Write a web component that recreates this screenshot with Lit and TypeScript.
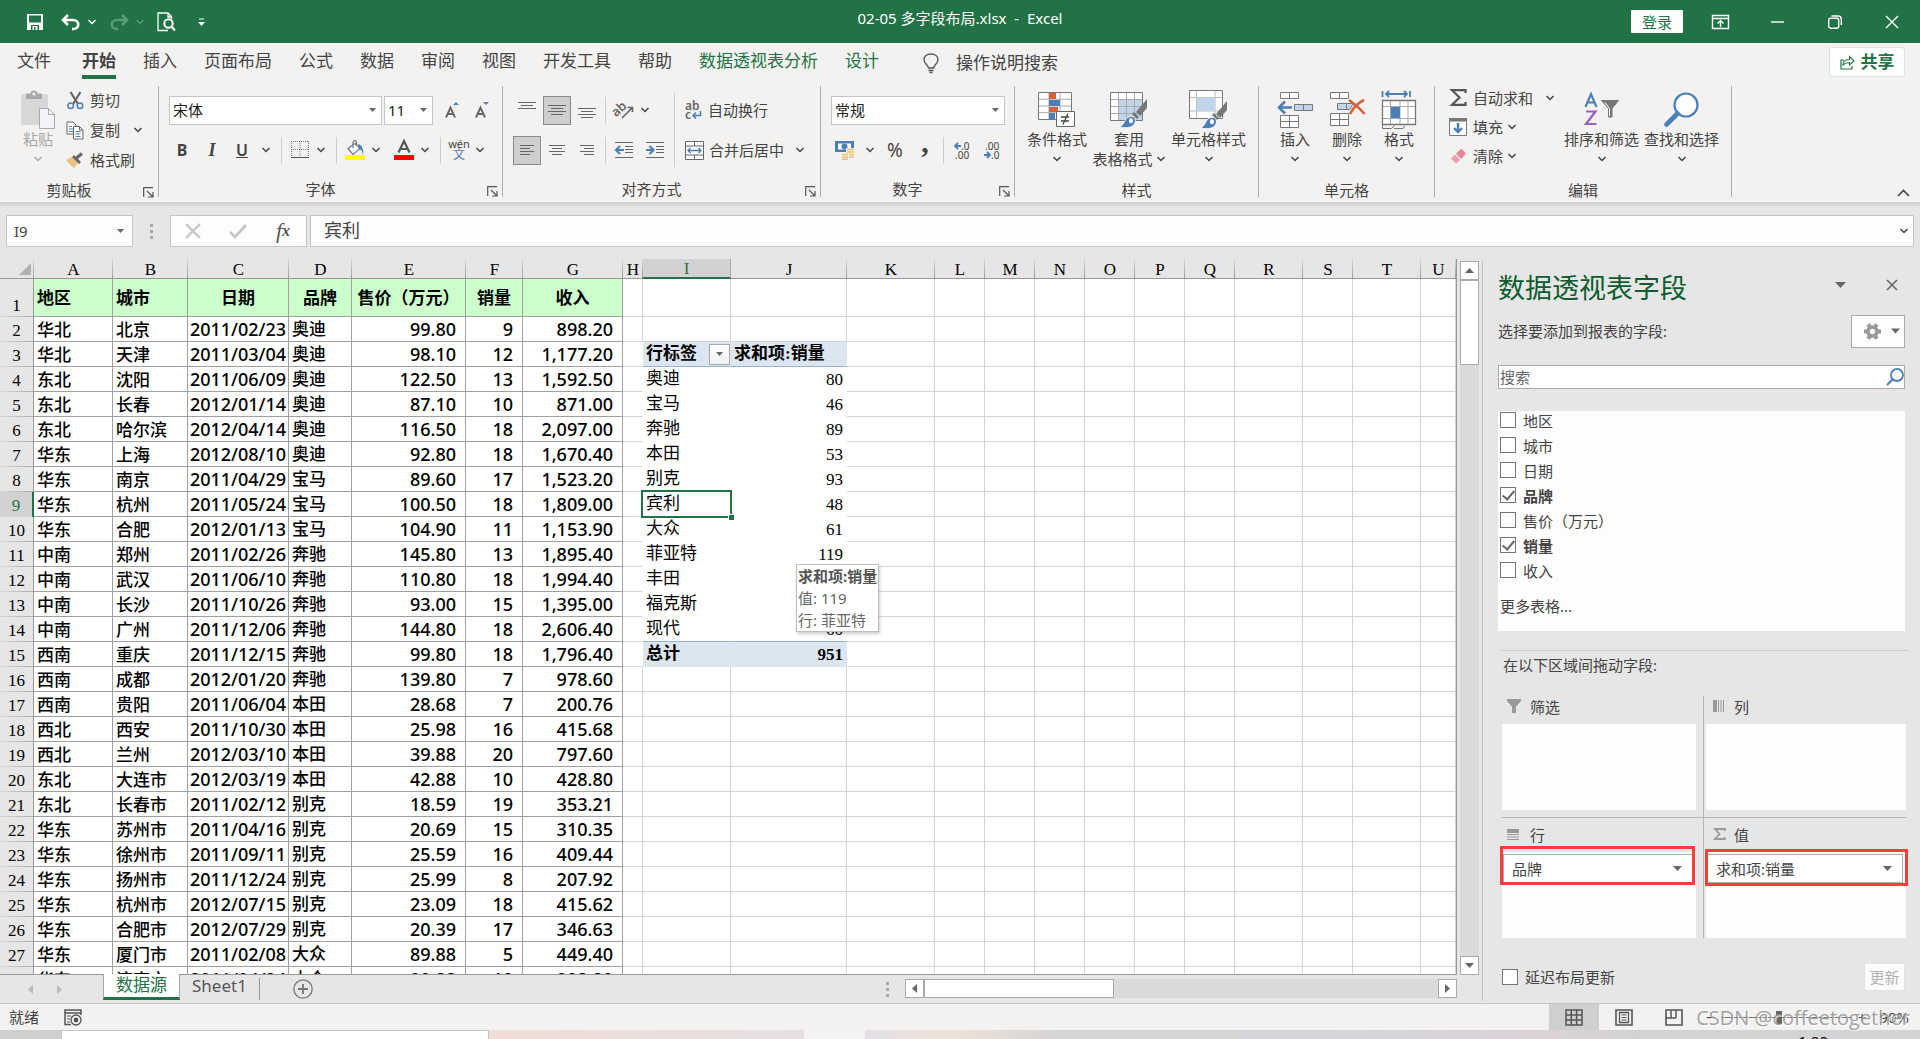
import { LitElement, html, svg, css, nothing } from "lit";
import { customElement } from "lit/decorators.js";
import { classMap } from "lit/directives/class-map.js";

const chevron = html`<svg class="chev" width="10" height="6" viewBox="0 0 10 6" aria-hidden="true"><path d="M1.5 1l3.500 3.500L8.500 1" fill="none" stroke="currentColor" stroke-width="1.500"/></svg>`;
const caret = html`<svg class="caret" width="7" height="4" viewBox="0 0 7 4" aria-hidden="true"><path d="M0 0h7L3.500 4z" fill="#666"/></svg>`;
const bigCaret = html`<svg width="11" height="6" viewBox="0 0 11 6" aria-hidden="true"><path d="M0 0h11L5.500 6z" fill="#666"/></svg>`;

const icon = (w: number, h: number, body: unknown) =>
  html`<svg width=${w} height=${h} viewBox="0 0 ${w} ${h}" fill="none" aria-hidden="true">${body}</svg>`;

const G = "#666";
const B = "#4a7fb8";

const lines = (rows: [number, number, number][]) =>
  rows.map(([x, y, w]) => svg`<path d="M${x} ${y + 0.5}h${w}" stroke=${G}/>`);

const I = {
  save: icon(16, 16, svg`<path d="M0 0h16v16H0z" fill="#fff"/><path d="M2 1.500h12v7H2zM4 11h8v5H4z" fill="#217346"/><path d="M5.500 12h5v4h-5z" fill="#fff"/><path d="M7 13h1.500v3H7z" fill="#217346"/>`),
  undo: icon(20, 16, svg`<path d="M7 1L2 6l5 5M3 6h9c7 0 7 9 0 9h-1" stroke="#fff" stroke-width="2.600"/>`),
  redo: icon(20, 16, svg`<path d="M13 1l5 5-5 5M17 6H8C1 6 1 15 8 15h1" stroke="#5a9a76" stroke-width="2.600"/>`),
  preview: icon(19, 20, svg`<path d="M11 18.500H1V1h10l3.500 3.500V7M11 1v4h3.500" stroke="#fff" stroke-width="1.300"/><circle cx="11.500" cy="11.500" r="4.200" stroke="#fff" stroke-width="2"/><path d="M14.500 14.500l3.500 4" stroke="#fff" stroke-width="2"/>`),
  custom: icon(7, 8, svg`<path d="M1 1h5" stroke="#fff"/><path d="M0 4h7L3.500 8z" fill="#fff"/>`),
  ribbonOpt: icon(17, 14, svg`<path d="M.5.5h16v13H.5zM.5 3.500h16" stroke="#fff" stroke-width="1.400"/><path d="M8.500 12V6M5.500 8.500l3-3 3 3" stroke="#fff" stroke-width="1.400"/>`),
  min: icon(13, 2, svg`<path d="M0 1h13" stroke="#fff" stroke-width="1.400"/>`),
  restore: icon(14, 14, svg`<rect x=".7" y="3.200" width="10" height="10" rx="2" stroke="#fff" stroke-width="1.400"/><path d="M3.500 1h6.500c2 0 3.300 1.300 3.300 3.300V10" stroke="#fff" stroke-width="1.400"/>`),
  close: icon(14, 14, svg`<path d="M1 1l12 12M13 1L1 13" stroke="#fff" stroke-width="1.400"/>`),
  bulb: icon(16, 21, svg`<path d="M5.500 15c0-3-4.500-4-4.500-8.500C1 3 4 1 8 1s7 2 7 5.500c0 4.500-4.500 5.500-4.500 8.500z" stroke="#555" stroke-width="1.400"/><path d="M5.500 17.500h5M6.500 19.500h3" stroke="#555" stroke-width="1.400"/>`),
  share: icon(15, 15, svg`<path d="M4 5H1v9h11v-3" stroke="#217346" stroke-width="1.200"/><path d="M3 10c0-4 3-5.500 6.500-5.500V1.500L14 6l-4.500 4V7.500C7 7.500 5 8 3 10z" stroke="#217346" stroke-width="1.100"/>`),
  paste: icon(36, 39, svg`<rect x="1" y="4" width="27" height="31" rx="2" fill="#d9d6d9"/><path d="M6 9V3.500h4.500C10.500-.5 17.500-.5 17.500 3.500H22V9z" fill="#a9a9a9"/><circle cx="14" cy="4" r="1.600" fill="#f3f2f1"/><path d="M19.500 18.500h9l6 6v14h-15z" fill="#f6f3f8" stroke="#a9a9a9"/><path d="M28.500 18.500v6h6" stroke="#a9a9a9"/>`),
  cut: icon(17, 19, svg`<path d="M3.500 1l7.500 12M13.500 1L6 13" stroke=${G} stroke-width="2.200"/><circle cx="3.700" cy="14.700" r="2.800" stroke=${B} stroke-width="1.500"/><circle cx="13" cy="14.700" r="2.800" stroke=${B} stroke-width="1.500"/>`),
  copy: icon(18, 19, svg`<path d="M1 1h6l3 3v9H1z" fill="#fff" stroke=${G}/><path d="M3 5.500h3M3 8h4M3 10.500h4" stroke=${B}/><path d="M7.500 5.500h6l3.500 3.500v9H7.500z" fill="#fff" stroke=${G}/><path d="M13.500 5.500V9H17" stroke=${G}/><path d="M9.500 10.500h5M9.500 13h5M9.500 15.500h5" stroke=${B}/>`),
  brush: icon(18, 16, svg`<path d="M0 8l6-3 6 6-4 5C5 14 3 11 0 8z" fill="#ecc083"/><path d="M6 5l2-2 7 7-2 2z" fill=${G}/><path d="M10.500 6L16 1.500" stroke=${G} stroke-width="3"/>`),
  grow: icon(14, 16, svg`<path d="M8 3h6L11 0z" fill=${B}/><path d="M1 15.500L5.500 5.500 10 15.500M2.800 12h5.400" stroke=${G} stroke-width="1.900"/>`),
  shrink: icon(14, 16, svg`<path d="M8 0h6L11 3z" fill=${B}/><path d="M1 15.500L5.500 5.500 10 15.500M2.800 12h5.400" stroke=${G} stroke-width="1.900"/>`),
  border: icon(18, 18, svg`<path d="M.5 0v16M17.500 0v16M9 0v16M0 .5h18M0 8.500h18" stroke="#777" stroke-dasharray="1 1"/><path d="M0 16.500h18" stroke="#555"/>`),
  fill: icon(20, 20, svg`<path d="M3 8.500l7-5 5 5-7 6z" fill="#fff" stroke="#777" stroke-width="1.200"/><path d="M8 8V2.500c0-2.500 3.500-2.500 3.500 0V5" stroke="#777" stroke-width="1.200"/><path d="M13 4c4 1 6 5 5 11-1-4-1-5-4-6z" fill=${B}/><path d="M0 15h20v5H0z" fill="#ff0"/>`),
  fontColor: icon(20, 20, svg`<path d="M4.500 12.500L10 1l5.500 11.500M6.500 9h7" stroke="#555" stroke-width="2.200"/><path d="M0 15h20v5H0z" fill="#f00"/>`),
  top: icon(18, 18, lines([[0, 1, 18], [3, 4, 12], [0, 7, 18]])),
  mid: icon(18, 12, lines([[0, 1, 18], [3, 4, 12], [0, 7, 18], [3, 10, 12]])),
  bot: icon(18, 18, lines([[0, 7, 18], [3, 10, 12], [0, 13, 18], [3, 16, 12]])),
  left: icon(14, 12, lines([[0, 1, 14], [0, 4, 10], [0, 7, 14], [0, 10, 10]])),
  center: icon(16, 12, lines([[0, 1, 16], [3, 4, 10], [0, 7, 16], [3, 10, 10]])),
  right: icon(14, 12, lines([[0, 1, 14], [4, 4, 10], [0, 7, 14], [4, 10, 10]])),
  outdent: icon(18, 16, svg`${lines([[0, 0, 18], [10, 4, 8], [10, 7, 8], [10, 10, 8], [0, 15, 18]])}<path d="M9 8H1.500M5 4L1 8l4 4" stroke=${B} stroke-width="2.200"/>`),
  indent: icon(18, 16, svg`${lines([[0, 0, 18], [10, 4, 8], [10, 7, 8], [10, 10, 8], [0, 15, 18]])}<path d="M0 8h7M3.500 4l4 4-4 4" stroke=${B} stroke-width="2.200"/>`),
  orient: icon(20, 18, svg`<text x="-1" y="13" transform="rotate(-42 5 11)" font-family="Noto Sans" font-size="13" font-weight="600" fill=${G}>ab</text><path d="M8 17L18 7M13.500 6.500H18.500V11" stroke=${G} stroke-width="1.600"/>`),
  wrap: icon(18, 19, svg`<text x="0" y="9" font-family="Noto Sans" font-size="12" font-weight="600" fill=${G}>ab</text><text x="0" y="18" font-family="Noto Sans" font-size="12" font-weight="600" fill=${G}>c</text><path d="M15.500 10v4.500H8.500M11 11.500l-3 3 3 3" stroke=${B} stroke-width="1.600"/>`),
  merge: icon(19, 19, svg`<path d="M.5.5h18v18H.5zM.5 5h18M.5 14h18M9.500.5V5M9.500 14v4.500" fill="#fff" stroke=${G}/><path d="M3 9.500h13M5.500 7L3 9.500 5.500 12M13.500 7l2.500 2.500-2.500 2.500" stroke=${B} stroke-width="1.400"/>`),
  money: icon(20, 19, svg`<path d="M0 0h19v11H0z" fill=${B}/><path d="M3 2.500h13v6H3z" fill="#fff"/><circle cx="9.500" cy="5.500" r="3" fill=${B}/><path d="M11 7h9v5h-4v7H6v-6h5z" fill="#f3f2f1"/><path d="M12 8.500h7M12 11h7M7 13.500h6M7 16h6M7 18.200h6M14 13.500h5M14 16h5" stroke="#ecbf72" stroke-width="1.600"/>`),
  decInc: icon(16, 17, svg`<path d="M7 4H1M4 1L1 4l3 3" stroke=${B} stroke-width="1.800"/><text x="7" y="8" font-family="Noto Sans" font-size="10" fill="#444">.0</text><text x="1" y="17" font-family="Noto Sans" font-size="10" fill="#444">.00</text>`),
  decDec: icon(16, 17, svg`<path d="M0 13h6M3 10l3 3-3 3" stroke=${B} stroke-width="1.800"/><text x="1" y="8" font-family="Noto Sans" font-size="10" fill="#444">.00</text><text x="7" y="17" font-family="Noto Sans" font-size="10" fill="#444">.0</text>`),
  cond: icon(38, 35, svg`<path d="M.5.5h33v27H.5z" fill="#fff"/><path d="M11 .5v27M22 .5v27M0 7.200h34M0 14h34M0 20.700h34" stroke="#aaa"/><path d="M.5.5h33v27H.5z" stroke="#777"/><path d="M11 1h7v6h-7zM11 15h9v5h-9z" fill="#d9603b"/><path d="M11 8h11v6H11zM11 21h6v6h-6z" fill=${B}/><path d="M18.500 19.500h18v15h-18z" fill="#fff" stroke="#666"/><path d="M23 25h8M23 29h8M30 21.500l-5 11" stroke="#444" stroke-width="1.300"/>`),
  tableFmt: icon(38, 36, svg`<path d="M.5.500h32v28H.5z" fill="#fff"/><path d="M8.500 7.500h24v21h-24z" fill="#c0d4ea"/><path d="M8.500.5v28M16.500.5v28M24.500.5v28M0 7.500h33M0 14.500h33M0 21.500h33" stroke="#aaa"/><path d="M.5.5h32v28H.5z" stroke="#777"/><path d="M37 7v9l-7 8-4-4z" fill="#777"/><path d="M24 20l5 5-2 2-5-5z" fill="#777"/><path d="M9 35.500c6-2 5-10 11-11 5-1 7 4 4 8s-9 3-15 3z" fill=${B} stroke="#fff" stroke-width=".8"/><path d="M20 26c3 0 4 3 2 5-3 1-4-2-2-5z" fill="#fff"/>`),
  cellStyle: icon(39, 39, svg`<path d="M.5.500h33v28H.5z" fill="#fff"/><path d="M7.500.5v28M26 .5v28M0 7.500h34M0 21h34" stroke="#bbb"/><path d="M7.500 7.500H26V21H7.500z" fill="#c0d4ea"/><path d="M.5.5h33v28H.5z" stroke="#777"/><path d="M38 11v9l-7 8-4-4z" fill="#777"/><path d="M25 23l5 5-2 2-5-5z" fill="#777"/><path d="M11 38.500c6-2 5-10 11-11 5-1 7 4 4 8s-9 3-15 3z" fill=${B} stroke="#fff" stroke-width=".8"/><path d="M22 29c3 0 4 3 2 5-3 1-4-2-2-5z" fill="#fff"/>`),
  insert: icon(37, 36, svg`<path d="M3.500.5h18v6h-18zM12.500.5v6M3.500 23.500h18v12h-18zM12.500 23.500v12M3.500 29.500h18" fill="#fff" stroke="#777"/><path d="M17.500 12.500h18v6h-18zM26.500 12.500v6" fill="#c0d4ea" stroke="#777"/><path d="M15 15.500H3M8 9.500l-6 6 6 6" stroke=${B} stroke-width="2.600"/>`),
  del: icon(37, 36, svg`<path d="M1.500.5h18v6h-18zM10.500.5v6M1.500 21.500h18v12h-18zM10.500 21.500v12M1.500 27.500h18" fill="#fff" stroke="#777"/><path d="M8.500 11.500h16l-4 6h-12zM17.500 11.500v6" fill="#c0d4ea" stroke="#777"/><path d="M20 8c4 3 11 8 15.500 14M35 8c-6 3-11 8-14 14" stroke="#d9603b" stroke-width="2.600"/>`),
  format: icon(35, 38, svg`<path d="M.5 0v6M28 0v6M4 3h21M7 0L4 3l3 3M22 0l3 3-3 3" stroke=${B} stroke-width="1.800"/><path d="M.5 9.500h33v24H.5z" fill="#fff"/><path d="M8.500 9v24M18 9v24M26 9v24M0 15.500h34M0 27.500h34" stroke="#aaa"/><path d="M.5 9.500h33v24H.5z" stroke="#777" stroke-width="1.300"/><path d="M9 16h9v11H9z" fill=${B}/><path d="M.5 34v3.500h9l3-3M12 37.500h9l2-3" stroke="#777"/>`),
  sigma: icon(17, 17, svg`<path d="M15.500 4V1.200H2L9.500 8.500 2 15.800h13.500V13" stroke="#555" stroke-width="2.200"/>`),
  fillDown: icon(18, 18, svg`<path d="M.5.5h17v17H.5z" fill="#fff" stroke="#777"/><path d="M0 0h18v3.500H0z" fill="#777"/><path d="M9 5v9M5 10l4 4 4-4" stroke=${B} stroke-width="2.400"/>`),
  eraser: icon(17, 16, svg`<path d="M6 5.500L11.500.8 16 5.500 11 11z" fill="#e8869a"/><path d="M5 6.500L10 12l-4 3.500L1 10.500z" fill="#eb9fae"/>`),
  sort: icon(36, 34, svg`<path d="M1.500 14L7 1l5.500 13M3.500 9.500h7" stroke=${B} stroke-width="2.200"/><path d="M2 18.500h9.500L2 31h10.500" stroke="#9b5fc0" stroke-width="2.200"/><path d="M17.500 7.500h17l-6.500 8V24h-3.500v-8.500z" fill="#777" stroke="#777"/><path d="M21 9.500l4.500 6V23" stroke="#fff"/>`),
  find: icon(35, 35, svg`<circle cx="22" cy="13" r="11.500" fill="#fff" stroke=${B} stroke-width="2.200"/><path d="M13.500 21.500L2.500 32.500" stroke=${B} stroke-width="4.600" stroke-linecap="round"/>`),
  launcher: icon(11, 11, svg`<path d="M.7 10V.7H10M4 4l6 6M10 5v5H5" stroke="#555" stroke-width="1.200"/>`),
  cancel: icon(16, 16, svg`<path d="M1 1l14 14M15 1L1 15" stroke="#c4c4c4" stroke-width="2.200"/>`),
  ok: icon(18, 14, svg`<path d="M1 8l5 5L17 1" stroke="#c4c4c4" stroke-width="2.600"/>`),
  gear: icon(17, 17, svg`<circle cx="8.500" cy="8.500" r="4.500" stroke="#999" stroke-width="3.600"/><path d="M0 8.500h3M14 8.500h3M4.200 1.200l1.600 2.600M12.800 1.200l-1.600 2.600M4.200 15.800l1.600-2.600M12.800 15.800l-1.600-2.600" stroke="#999" stroke-width="4"/>`),
  search: icon(18, 18, svg`<circle cx="11" cy="7" r="6" stroke=${B} stroke-width="1.800"/><path d="M6.500 11.500L1 17" stroke=${B} stroke-width="2.200"/>`),
  paneClose: icon(12, 12, svg`<path d="M1 1l10 10M11 1L1 11" stroke="#666" stroke-width="1.600"/>`),
  funnel: icon(14, 14, svg`<path d="M0 0h14v2L9 7.500V14H5V7.500L0 2z" fill="#999"/>`),
  cols: icon(11, 12, svg`<path d="M0 0h4v12H0z" fill="#999"/><path d="M5.500 0v12M8 0v12M10.500 0v12" stroke="#999"/>`),
  rows: icon(12, 11, svg`<path d="M0 0h12v4H0z" fill="#999"/><path d="M0 5.500h12M0 8h12M0 10.500h12" stroke="#999"/>`),
  sum: icon(13, 12, svg`<path d="M11.800 3V1H2l4.500 5L2 11h9.800V9" stroke="#999" stroke-width="1.800"/>`),
  plus: icon(20, 20, svg`<circle cx="10" cy="10" r="9.200" stroke="#777" stroke-width="1.300"/><path d="M10 5v10M5 10h10" stroke="#777" stroke-width="1.800"/>`),
  macro: icon(18, 17, svg`<path d="M17 6V1H1v14.500h6M1 4h16" stroke="#555" stroke-width="1.500"/><path d="M3 7h4M3 10h3M3 13h3" stroke="#555"/><circle cx="12" cy="11" r="5" stroke="#555" stroke-width="1.300"/><circle cx="12" cy="11" r="2.400" fill="#555"/>`),
  normal: icon(18, 17, svg`<path d="M1 1h16v15H1zM6.300 1v15M11.600 1v15M1 6h16M1 11h16" stroke="#555" stroke-width="1.500"/>`),
  pageLayout: icon(18, 17, svg`<path d="M1 1h16v15H1z" stroke="#555" stroke-width="1.600"/><path d="M4.500 3.500h9v10h-9z" stroke="#555" stroke-width="1.300"/><path d="M6.500 6h5M6.500 8.500h5M6.500 11h5" stroke="#555"/>`),
  pageBreak: icon(18, 17, svg`<path d="M1 1h16v15H1z" stroke="#555" stroke-width="1.600"/><path d="M6 1v8M1 9h10M11 1v8" stroke="#555" stroke-width="1.500"/>`),
  collapse: icon(13, 8, svg`<path d="M1 7l5.500-5.500L12 7" stroke="#444" stroke-width="1.600"/>`),
  arrow: (d: string) => icon(9, 9, svg`<path d=${d} fill="#666"/>`),
};

const UP = "M0 7h9L4.500 2z";
const DOWN = "M0 2h9L4.500 7z";
const LEFT = "M7 0v9L2 4.500z";
const RIGHT = "M2 0v9L7 4.500z";

const COLUMNS: [string, number][] = [
  ["A", 79], ["B", 75], ["C", 101], ["D", 63], ["E", 114], ["F", 57], ["G", 100], ["H", 20], ["I", 88], ["J", 116],
  ["K", 88], ["L", 50], ["M", 50], ["N", 50], ["O", 50], ["P", 50], ["Q", 50], ["R", 68], ["S", 50], ["T", 68], ["U", 0],
];

const DATA = `地区|城市|日期|品牌|售价（万元）|销量|收入
华北|北京|2011/02/23|奥迪|99.80|9|898.20
华北|天津|2011/03/04|奥迪|98.10|12|1,177.20
东北|沈阳|2011/06/09|奥迪|122.50|13|1,592.50
东北|长春|2012/01/14|奥迪|87.10|10|871.00
东北|哈尔滨|2012/04/14|奥迪|116.50|18|2,097.00
华东|上海|2012/08/10|奥迪|92.80|18|1,670.40
华东|南京|2011/04/29|宝马|89.60|17|1,523.20
华东|杭州|2011/05/24|宝马|100.50|18|1,809.00
华东|合肥|2012/01/13|宝马|104.90|11|1,153.90
中南|郑州|2011/02/26|奔驰|145.80|13|1,895.40
中南|武汉|2011/06/10|奔驰|110.80|18|1,994.40
中南|长沙|2011/10/26|奔驰|93.00|15|1,395.00
中南|广州|2011/12/06|奔驰|144.80|18|2,606.40
西南|重庆|2011/12/15|奔驰|99.80|18|1,796.40
西南|成都|2012/01/20|奔驰|139.80|7|978.60
西南|贵阳|2011/06/04|本田|28.68|7|200.76
西北|西安|2011/10/30|本田|25.98|16|415.68
西北|兰州|2012/03/10|本田|39.88|20|797.60
东北|大连市|2012/03/19|本田|42.88|10|428.80
东北|长春市|2011/02/12|别克|18.59|19|353.21
华东|苏州市|2011/04/16|别克|20.69|15|310.35
华东|徐州市|2011/09/11|别克|25.59|16|409.44
华东|扬州市|2011/12/24|别克|25.99|8|207.92
华东|杭州市|2012/07/15|别克|23.09|18|415.62
华东|合肥市|2012/07/29|别克|20.39|17|346.63
华东|厦门市|2011/02/08|大众|89.88|5|449.40
华东|济南市|2011/04/24|大众|90.88|10|908.80`.split("\n").map((r) => r.split("|"));

const PIVOT: Record<number, [string, string]> = {
  3: ["行标签", "求和项:销量"],
  4: ["奥迪", "80"], 5: ["宝马", "46"], 6: ["奔驰", "89"], 7: ["本田", "53"], 8: ["别克", "93"], 9: ["宾利", "48"],
  10: ["大众", "61"], 11: ["菲亚特", "119"], 12: ["丰田", ""], 13: ["福克斯", ""], 14: ["现代", "60"], 15: ["总计", "951"],
};

const UI_FONT = css`"Noto Sans", "Noto Sans CJK SC", sans-serif`;

const base = css`
  * { box-sizing: border-box; }
  svg { display: block; flex: none; overflow: visible; }
  button, input, select { font: inherit; color: inherit; margin: 0; }
  button { background: none; border: 0; padding: 0; display: flex; align-items: center; justify-content: center; white-space: nowrap; cursor: default; }
`;

@customElement("title-bar")
class TitleBar extends LitElement {
  static styles = [base, css`
    :host { display: grid; grid-template-columns: 1fr auto 1fr; align-items: center; height: 43px; background: #217346; color: #fff; font: 15px/20px ${UI_FONT}; }
    .quick { display: flex; align-items: center; padding-left: 27px; }
    .gap { margin-right: 18px; }
    .undo { margin-right: 6px; }
    .drop { margin-right: 12px; }
    .dim { color: #5a9a76; }
    .preview { margin-right: 22px; }
    .title { white-space: pre; padding-bottom: 7px; }
    .win { display: flex; align-items: center; justify-content: flex-end; }
    .win button { width: 57px; height: 43px; }
    .win .login { width: 52px; height: 23px; background: #fff; color: #217346; margin-right: 9px; border-radius: 1px; }
  `];
  render() {
    return html`
      <div class="quick">
        <button class="gap" aria-label="保存">${I.save}</button>
        <button class="undo" aria-label="撤消">${I.undo}</button><button class="drop" aria-label="撤消列表">${chevron}</button>
        <button class="undo" aria-label="恢复">${I.redo}</button><button class="drop dim" aria-label="恢复列表">${chevron}</button>
        <button class="preview" aria-label="打印预览">${I.preview}</button>
        <button aria-label="自定义快速访问工具栏">${I.custom}</button>
      </div>
      <div class="title">02-05 多字段布局.xlsx  -  Excel</div>
      <div class="win">
        <button class="login">登录</button>
        <button aria-label="功能区显示选项">${I.ribbonOpt}</button>
        <button aria-label="最小化">${I.min}</button>
        <button aria-label="还原">${I.restore}</button>
        <button aria-label="关闭">${I.close}</button>
      </div>`;
  }
}

@customElement("ribbon-tabs")
class RibbonTabs extends LitElement {
  static styles = [base, css`
    :host { display: flex; align-items: flex-start; height: 37px; padding: 4px 15px 0 17px; background: #f3f2f1; color: #444; font: 17px/30px ${UI_FONT}; }
    nav { display: flex; gap: 27px; }
    .tab { height: 32px; border-bottom: 4px solid transparent; line-height: 28px; }
    .file { margin-right: 4px; }
    .active { font-weight: 700; border-color: #217346; }
    .context { color: #217346; }
    .tell { height: 32px; gap: 17px; margin-left: 44px; }
    .share { margin-left: auto; width: 76px; height: 30px; gap: 6px; color: #217346; font-weight: 700; background: #fff; border: 1px solid #e1dfdd; border-radius: 3px; }
  `];
  render() {
    const tabs = ["文件", "开始", "插入", "页面布局", "公式", "数据", "审阅", "视图", "开发工具", "帮助", "数据透视表分析", "设计"];
    return html`
      <nav>${tabs.map((t, i) => html`<button class=${classMap({ tab: true, file: i === 0, active: i === 1, context: i > 9 })}>${t}</button>`)}</nav>
      <button class="tell">${I.bulb}<span>操作说明搜索</span></button>
      <button class="share">${I.share}<span>共享</span></button>`;
  }
}

@customElement("ribbon-body")
class RibbonBody extends LitElement {
  static styles = [base, css`
    :host { display: flex; height: 122px; background: #f3f2f1; color: #444; font: 15px/20px ${UI_FONT}; }
    .group { display: grid; grid-template-rows: 1fr 23px; }
    .vr { width: 1px; background: #b1b1b1; margin: 6px 0 5px; flex: none; }
    .foot { display: flex; align-items: flex-start; }
    .foot span { flex: 1; text-align: center; }
    .foot button { width: 20px; height: 25px; }
    .clip { width: 158px; } .font { width: 343px; } .align { width: 317px; } .num { width: 193px; }
    .styles { width: 243px; } .cells { width: 175px; } .edit { width: 296px; }
    .body { display: flex; align-items: flex-start; }
    .rows { display: grid; gap: 10px; padding: 15px 0 0 10px; }
    .font .row2 { margin-left: -2px; }
    .row { display: flex; align-items: center; height: 30px; }
    .b { width: 24px; height: 29px; }
    .m { width: 28px; height: 29px; }
    .w { width: 30px; height: 29px; }
    .on { background: #d0cecd; border: 1px solid #8c8c8c; }
    .drop { width: 18px; height: 29px; }
    .sp { gap: 2px; display: flex; }
    .sep { width: 1px; height: 27px; background: #d0cecd; margin: 0 6px; flex: none; }
    .near { margin-left: 4px; }
    .num .near { margin-right: 4px; }
    .tall { width: 1px; height: 74px; background: #d0cecd; margin: 13px 7px 0; }
    .after { margin-left: 7px; }
    .pick { display: grid; align-items: center; height: 29px; background: #fff; border: 1px solid #c6c6c6; color: #222; }
    .pick > * { grid-area: 1 / 1; }
    .pick .caret { justify-self: end; margin-right: 5px; pointer-events: none; }
    select { appearance: none; border: 0; background: none; width: 100%; height: 100%; padding: 0 0 0 3px; outline: 0; }
    .face { width: 213px; margin-right: 2px; } .size { width: 49px; margin-right: 4px; } .numfmt { width: 174px; }
    .label { gap: 2px; }
    .label svg { margin: 0 3px; }
    .rows2 { display: grid; gap: 10px; padding-top: 15px; }
    .bold { font-weight: 700; font-size: 16px; } .ital { font: italic 700 18px/20px "Liberation Serif", serif; } .under { text-decoration: underline; font-weight: 600; font-size: 16px; }
    .wen { display: grid; justify-items: center; font-size: 11px; line-height: 10px; }
    .wen b { color: #4a7fb8; font-weight: 400; font-size: 12px; line-height: 12px; }
    .pct { font-size: 19px; } .comma { font: 700 30px/10px "Liberation Serif", serif; padding-bottom: 16px; }
    .big { display: flex; flex-direction: column; justify-content: flex-start; height: 90px; white-space: nowrap; }
    .big .pic { height: 39px; display: grid; align-items: center; }
    .big .line { height: 20px; display: flex; align-items: center; justify-content: center; }
    .bigs { display: flex; gap: 5px; padding-top: 10px; }
    .c60 { width: 60px; } .c74 { width: 74px; } .c75 { width: 75px; } .c48 { width: 48px; }
    .line .chev { margin-left: 3px; }
    .only .chev { margin: 0; }
    .disabled { color: #a8a8a8; }
    .paste { padding: 10px 0 0 20px; }
    .small { display: grid; padding: 5px 0 0 10px; grid-auto-rows: 30px; align-items: center; justify-items: start; }
    .tool { height: 24px; gap: 6px; }
    .tool .pic { width: 18px; display: grid; justify-items: center; }
    .tool .chev { margin-left: 7px; }
    .edits { padding: 3px 0 0 14px; grid-auto-rows: 29px; width: 129px; }
    .edits .chev { margin-left: -2px; }
    .edits .wide .chev { margin-left: 6px; }
    .st { padding-left: 12px; } .ce { padding-left: 12px; gap: 4px; }
    .fold { margin: auto 10px 5px auto; }
  `];
  foot(label: string, launch = true) {
    return html`<div class="foot"><span>${label}</span>${launch ? html`<button aria-label="${label}设置">${I.launcher}</button>` : nothing}</div>`;
  }
  b(cls: string, label: string, content: unknown) {
    return html`<button class=${cls} aria-label=${label}>${content}</button>`;
  }
  drop(label: string) {
    return html`<button class="drop" aria-label="${label}选项">${chevron}</button>`;
  }
  big(cls: string, pic: unknown, label: string, second?: string) {
    return html`<button class="big ${cls}"><span class="pic">${pic}</span><span class="line">${label}</span>
      <span class=${second ? "line" : "line only"}>${second ?? ""}${chevron}</span></button>`;
  }
  render() {
    return html`
      <section class="group clip">
        <div class="body">
          <div class="paste">${this.big("disabled", I.paste, "粘贴")}</div>
          <div class="small">
            <button class="tool"><span class="pic">${I.cut}</span>剪切</button>
            <button class="tool"><span class="pic">${I.copy}</span>复制${chevron}</button>
            <button class="tool"><span class="pic">${I.brush}</span>格式刷</button>
          </div>
        </div>
        ${this.foot("剪贴板")}
      </section><div class="vr"></div>
      <section class="group font">
        <div class="body"><div class="rows">
          <div class="row">
            <div class="pick face"><select aria-label="字体"><option>宋体</option></select>${caret}</div>
            <div class="pick size"><select aria-label="字号"><option>11</option></select>${caret}</div>
            ${this.b("w", "增大字号", I.grow)}${this.b("w", "减小字号", I.shrink)}
          </div>
          <div class="row row2">
            ${this.b("w bold", "加粗", "B")}${this.b("w ital", "倾斜", "I")}${this.b("w under", "下划线", "U")}${this.drop("下划线")}
            <i class="sep"></i>${this.b("b", "边框", I.border)}${this.drop("边框")}
            <i class="sep"></i>${this.b("b", "填充颜色", I.fill)}${this.drop("填充颜色")}
            ${this.b("b after", "字体颜色", I.fontColor)}${this.drop("字体颜色")}
            <i class="sep"></i>${this.b("b", "拼音", html`<span class="wen">wén<b>文</b></span>`)}${this.drop("拼音")}
          </div>
        </div></div>
        ${this.foot("字体")}
      </section><div class="vr"></div>
      <section class="group align">
        <div class="body">
          <div class="rows">
            <div class="row"><div class="sp">${this.b("m", "顶端对齐", I.top)}${this.b("m on", "垂直居中", I.mid)}${this.b("m", "底端对齐", I.bot)}</div>
              <i class="sep near"></i>${this.b("b", "方向", I.orient)}${this.drop("方向")}</div>
            <div class="row"><div class="sp">${this.b("m on", "左对齐", I.left)}${this.b("m", "居中", I.center)}${this.b("m", "右对齐", I.right)}</div>
              <i class="sep near"></i>${this.b("b", "减少缩进量", I.outdent)}${this.b("b after", "增加缩进量", I.indent)}</div>
          </div>
          <i class="tall"></i>
          <div class="rows2">
            <div class="row"><button class="label">${I.wrap}自动换行</button></div>
            <div class="row"><button class="label">${I.merge}合并后居中</button><span class="after">${this.drop("合并")}</span></div>
          </div>
        </div>
        ${this.foot("对齐方式")}
      </section><div class="vr"></div>
      <section class="group num">
        <div class="body"><div class="rows">
          <div class="row"><div class="pick numfmt"><select aria-label="数字格式"><option>常规</option></select>${caret}</div></div>
          <div class="row"><div class="sp">${this.b("m", "会计数字格式", I.money)}${this.drop("会计数字格式")}${this.b("m pct", "百分比样式", "%")}${this.b("m comma", "千位分隔样式", ",")}</div>
            <i class="sep near"></i><div class="sp">${this.b("m", "增加小数位数", I.decInc)}${this.b("m", "减少小数位数", I.decDec)}</div></div>
        </div></div>
        ${this.foot("数字")}
      </section><div class="vr"></div>
      <section class="group styles">
        <div class="bigs st">${this.big("c60", I.cond, "条件格式")}${this.big("c74", I.tableFmt, "套用", "表格格式")}${this.big("c75", I.cellStyle, "单元格样式")}</div>
        ${this.foot("样式", false)}
      </section><div class="vr"></div>
      <section class="group cells">
        <div class="bigs ce">${this.big("c48", I.insert, "插入")}${this.big("c48", I.del, "删除")}${this.big("c48", I.format, "格式")}</div>
        ${this.foot("单元格", false)}
      </section><div class="vr"></div>
      <section class="group edit">
        <div class="body">
          <div class="small edits">
            <button class="tool wide"><span class="pic">${I.sigma}</span>自动求和${chevron}</button>
            <button class="tool"><span class="pic">${I.fillDown}</span>填充${chevron}</button>
            <button class="tool"><span class="pic">${I.eraser}</span>清除${chevron}</button>
          </div>
          <div class="bigs">${this.big("c75", I.sort, "排序和筛选")}${this.big("c75", I.find, "查找和选择")}</div>
        </div>
        ${this.foot("编辑", false)}
      </section><div class="vr"></div>
      <button class="fold" aria-label="折叠功能区">${I.collapse}</button>`;
  }
}

@customElement("formula-bar")
class FormulaBar extends LitElement {
  static styles = [base, css`
    :host { display: flex; height: 57px; padding: 13px 6px 12px; background: linear-gradient(#cfcdcc, #e6e6e6 6px); color: #444; font: 15px/20px ${UI_FONT}; }
    .box { background: #fdfdfd; border: 1px solid #c6c6c6; display: flex; align-items: center; }
    .name { width: 127px; padding-right: 8px; }
    input { border: 0; outline: 0; background: none; width: 100%; height: 100%; padding: 0 7px; min-width: 0; }
    .dots { width: 37px; display: grid; place-content: center; gap: 3px; }
    .dots i { width: 3px; height: 3px; background: #aaa; }
    .acts { width: 137px; margin-right: 3px; justify-content: space-between; padding: 0 16px 0 14px; }
    .fx { font: italic 22px/24px "Liberation Serif", serif; color: #555; }
    .fx small { font-size: 16px; font-weight: 700; }
    .formula { flex: 1; padding-right: 4px; }
    .formula input { font-size: 18px; padding: 0 13px 4px; }
  `];
  render() {
    return html`
      <div class="box name"><input aria-label="名称框" .value=${"I9"}>${caret}</div>
      <div class="dots"><i></i><i></i><i></i></div>
      <div class="box acts"><button aria-label="取消">${I.cancel}</button><button aria-label="输入">${I.ok}</button><button class="fx" aria-label="插入函数">f<small>x</small></button></div>
      <div class="box formula"><input aria-label="编辑栏" .value=${"宾利"}><button aria-label="展开编辑栏">${chevron}</button></div>`;
  }
}

@customElement("work-sheet")
class WorkSheet extends LitElement {
  static styles = [base, css`
    :host { display: block; overflow: hidden; background: #fff; border-right: 1px solid #999; border-bottom: 1px solid #999; color: #000; font: 17px/20px "Noto Sans", "Noto Sans CJK SC", sans-serif; }
    table { table-layout: fixed; width: 100%; border-collapse: separate; border-spacing: 0; }
    th, td { padding: 0 3px; height: 25px; white-space: nowrap; border-right: 1px solid #d4d4d4; border-bottom: 1px solid #d4d4d4; font-weight: 400; text-align: left; }
    thead th { height: 20px; padding: 1px 0 0; line-height: 17px; text-align: center; border-right: 0; border-bottom-color: #999; font-family: "Liberation Serif", serif; background: linear-gradient(#dadada, #999) right / 1px 100% no-repeat #e6e6e6; }
    thead .sel { background: #d2d2d2; color: #217346; border-bottom: 2px solid #217346; border-right: 1px solid #aaa; }
    thead .corner svg { margin-left: 19px; }
    .no { padding: 3px 0 0; text-align: center; background: linear-gradient(to right, #dadada, #aaa) bottom / 100% 1px no-repeat #e6e6e6; border-bottom: 0; border-right-color: #999; font-family: "Liberation Serif", serif; }
    .no.sel { background: #d2d2d2; color: #217346; border-right: 2px solid #217346; }
    .first > * { height: 38px; }
    .first .no { padding-top: 16px; }
    .d { border-color: #a0a0a0; font-weight: 500; }
    .first .d { background: #cfc; font-weight: 600; }
    .text { padding-top: 2px; }
    .mid { text-align: center; padding: 0; }
    .r { text-align: right; padding-right: 9px; }
    .fig { font-size: 18px; }
    .p { border-color: transparent; font-family: "Liberation Serif", "Noto Sans CJK SC", serif; }
    .edge { border-right-color: transparent; }
    .pr { text-align: right; padding-top: 1px; }
    .tot { background: #dce6f1; font-weight: 700; border-bottom-color: #dce6f1; border-right-color: #dce6f1; }
    .under { border-bottom-color: #95b3d7; }
    .cell { display: flex; align-items: center; justify-content: space-between; margin-right: -3px; }
    .filter { width: 21px; height: 21px; border: 1px solid #ababab; background: linear-gradient(#fff, #eef1f6); }
    .anchor { position: relative; }
    .cursor { position: absolute; inset: -2px; border: 2px solid #217346; pointer-events: none; }
    .cursor i { position: absolute; right: -4px; bottom: -4px; width: 6px; height: 6px; background: #217346; border: solid #fff; border-width: 1px 0 0 1px; }
    .tip { position: absolute; z-index: 2; left: 65px; top: 22px; background: #fff; border: 1px solid #bebebe; box-shadow: 1px 2px 3px #0003; padding: 0 1px; font: 15px/22px ${UI_FONT}; color: #666; text-align: left; }
    .tip b { display: block; color: #555; }
    .tip span { display: block; }
  `];
  dataCell(row: number, c: number) {
    const v = DATA[row - 1]?.[c];
    if (v === undefined) return html`<td></td>`;
    const head = row === 1;
    return html`<td class=${classMap({ d: true, text: !head && c < 2, mid: c === 2 || (head && c > 2), r: !head && c > 3, fig: !head && (c === 2 || c > 3) })}>${v}</td>`;
  }
  pivotCell(row: number, c: number) {
    const p = PIVOT[row];
    const total = row === 3 || row === 15;
    const cls = classMap({ p: true, tot: total, under: row === 3 || row === 14, pr: c === 1 && row > 3, anchor: (row === 9 && c === 0) || (row === 11 && c === 1) });
    if (row === 3 && c === 0) return html`<td class=${cls}><div class="cell">${p[0]}<button class="filter" aria-label="筛选行标签">${caret}</button></div></td>`;
    return html`<td class=${cls}>${p[c]}${row === 9 && c === 0 ? html`<span class="cursor"><i></i></span>` : nothing}${row === 11 && c === 1
      ? html`<div class="tip" role="tooltip"><b>求和项:销量</b><span>值: 119</span><span>行: 菲亚特</span></div>` : nothing}</td>`;
  }
  render() {
    return html`<table>
      <colgroup><col style="width:34px">${COLUMNS.map(([, w]) => (w ? html`<col style="width:${w}px">` : html`<col>`))}</colgroup>
      <thead><tr><th class="corner">${icon(12, 12, svg`<path d="M12 0v12H0z" fill="#b1b1b1"/>`)}</th>
        ${COLUMNS.map(([n]) => html`<th class=${n === "I" ? "sel" : ""}>${n}</th>`)}</tr></thead>
      <tbody>${DATA.map((_, i) => {
        const row = i + 1;
        return html`<tr class=${row === 1 ? "first" : ""}><th class=${row === 9 ? "no sel" : "no"}>${row}</th>
          ${COLUMNS.map(([n], c) => {
            if (c < 7) return this.dataCell(row, c);
            if (PIVOT[row] && n === "H") return html`<td class="edge"></td>`;
            if (PIVOT[row] && (n === "I" || n === "J")) return this.pivotCell(row, c - 8);
            return html`<td></td>`;
          })}</tr>`;
      })}</tbody></table>`;
  }
}

@customElement("sheet-tabs")
class SheetTabs extends LitElement {
  static styles = [base, css`
    :host { display: flex; height: 28px; background: #e6e6e6; color: #555; font: 17px/20px ${UI_FONT}; }
    .nav { display: flex; align-items: center; gap: 20px; padding-left: 26px; width: 103px; opacity: .35; }
    .tab { height: 21px; padding: 0 12px; }
    .active { height: 26px; background: #fff; color: #217346; border: solid #aaa; border-width: 0 1px; border-bottom: 3px solid #217346; margin-top: -1px; padding-bottom: 2px; }
    .end { width: 1px; height: 22px; background: #999; margin: 3px 33px 0 0; }
    .dots { margin-left: auto; display: grid; align-content: center; gap: 3px; padding-right: 16px; }
    .dots i { width: 3px; height: 3px; background: #aaa; }
    .bar { display: flex; width: 552px; height: 19px; margin-top: 4px; background: #dadada; }
    .bar button { width: 19px; background: #fff; border: 1px solid #ababab; }
    .thumb { width: 190px; background: #fff; border: 1px solid #ababab; }
    .bar .last { margin-left: auto; }
  `];
  render() {
    return html`
      <div class="nav"><button aria-label="上一个工作表">${I.arrow(LEFT)}</button><button aria-label="下一个工作表">${I.arrow(RIGHT)}</button></div>
      <button class="tab active">数据源</button><button class="tab">Sheet1</button><i class="end"></i>
      <button aria-label="新工作表">${I.plus}</button>
      <div class="dots"><i></i><i></i><i></i></div>
      <div class="bar"><button aria-label="向左滚动">${I.arrow(LEFT)}</button><div class="thumb"></div><button class="last" aria-label="向右滚动">${I.arrow(RIGHT)}</button></div>`;
  }
}

@customElement("field-pane")
class FieldPane extends LitElement {
  static styles = [base, css`
    :host { display: block; border-left: 1px solid #c0c0c0; margin: 2px 0; padding: 9px 15px 0; color: #444; font: 15px/20px ${UI_FONT}; }
    header { display: flex; align-items: center; height: 36px; padding-right: 7px; }
    h2 { margin: 0 auto 0 0; font-size: 27px; line-height: 36px; font-weight: 400; color: #0e5c2f; }
    header button { margin: 0 0 6px 40px; }
    .sub { display: flex; align-items: center; justify-content: space-between; height: 34px; margin-top: 8px; }
    .gear { width: 54px; height: 33px; background: #fdfdfd; border: 1px solid #ababab; gap: 10px; padding-left: 8px; }
    .gear svg:last-child { width: 9px; }
    .search { display: flex; align-items: center; height: 24px; margin-top: 17px; background: #fff; border: 1px solid #ababab; }
    .search input { flex: 1; min-width: 0; border: 0; outline: 0; padding: 0 1px; background: none; height: 22px; }
    .search input::placeholder { color: #666; opacity: 1; }
    .list { height: 220px; margin-top: 22px; background: #fdfdfd; padding: 1px 2px; display: flex; flex-direction: column; }
    label { display: flex; align-items: flex-start; gap: 7px; height: 25px; line-height: 18px; }
    .on { font-weight: 700; }
    input[type="checkbox"] { appearance: none; width: 16px; height: 16px; border: 1px solid #767676; background: #fff; flex: none; display: grid; place-content: center; }
    input[type="checkbox"]:checked::before { content: ""; width: 5px; height: 10px; border: solid #666; border-width: 0 2px 2px 0; transform: rotate(40deg); margin-top: -3px; }
    .more { color: inherit; text-decoration: none; margin-top: 9px; }
    .drag { border-top: 1px dotted #b5b5b5; margin: 19px -4px 0 2px; padding: 4px 3px 0; }
    .zones { display: grid; grid-template-columns: 1fr 1fr; margin: 21px -1px 0 4px; }
    .zone:nth-child(odd) { border-right: 1px solid #b5b5b5; padding-right: 7px; }
    .zone:nth-child(even) { padding-left: 2px; }
    .zone:nth-child(-n + 2) { border-bottom: 1px solid #b5b5b5; padding-bottom: 7px; }
    .zone:nth-child(n + 3) { padding-top: 6px; }
    .head { display: flex; align-items: center; height: 28px; padding: 0 0 6px 5px; }
    .head svg { margin-top: -2px; }
    .pic { width: 23px; }
    .zone:nth-child(even) .head { padding-left: 7px; }
    .zone:nth-child(even) .pic { width: 21px; }
    .well { height: 86px; background: #fdfdfd; position: relative; padding: 2px 3px 0 1px; }
    .item { width: 100%; height: 29px; justify-content: space-between; background: #fff; border: 1px solid #ababab; padding: 0 10px 0 8px; }
    .mark { position: absolute; border: 3px solid #ff3b3b; pointer-events: none; inset: -6px 1px auto -2px; height: 39px; }
    .zone:nth-child(even) .mark { inset: -3px -2px auto -1px; height: 37px; }
    footer { display: flex; align-items: center; justify-content: space-between; margin-top: 25px; padding-left: 4px; height: 28px; }
    footer label { height: auto; align-items: center; }
    footer button { width: 41px; height: 28px; background: #fdfdfd; border: 1px solid #e1e1e1; color: #b1b1b1; }
  `];
  zone(pic: unknown, name: string, item?: string) {
    return html`<div class="zone"><div class="head"><span class="pic">${pic}</span>${name}</div>
      <div class="well">${item ? html`<button class="item"><span>${item}</span>${icon(9, 5, svg`<path d="M0 0h9L4.500 5z" fill="#666"/>`)}</button><span class="mark"></span>` : nothing}</div></div>`;
  }
  render() {
    const fields: [string, boolean][] = [["地区", false], ["城市", false], ["日期", false], ["品牌", true], ["售价（万元）", false], ["销量", true], ["收入", false]];
    return html`
      <header><h2>数据透视表字段</h2><button aria-label="任务窗格选项">${bigCaret}</button><button aria-label="关闭窗格">${I.paneClose}</button></header>
      <div class="sub"><span>选择要添加到报表的字段:</span><button class="gear" aria-label="工具">${I.gear}${bigCaret}</button></div>
      <div class="search"><input aria-label="搜索字段" placeholder="搜索">${I.search}</div>
      <div class="list">
        ${fields.map(([f, on]) => html`<label class=${on ? "on" : ""}><input type="checkbox" ?checked=${on}>${f}</label>`)}
        <a class="more" href="#more">更多表格...</a>
      </div>
      <div class="drag">在以下区域间拖动字段:</div>
      <div class="zones">
        ${this.zone(I.funnel, "筛选")}${this.zone(I.cols, "列")}${this.zone(I.rows, "行", "品牌")}${this.zone(I.sum, "值", "求和项:销量")}
      </div>
      <footer><label><input type="checkbox">延迟布局更新</label><button disabled>更新</button></footer>`;
  }
}

@customElement("status-bar")
class StatusBar extends LitElement {
  static styles = [base, css`
    :host { display: flex; align-items: center; position: relative; height: 27px; border-top: 1px solid #c6c6c6; background: #f3f2f1; color: #444; font: 15px/20px ${UI_FONT}; padding: 0 11px 0 9px; }
    .rec { margin: 0 auto 0 25px; }
    .view { width: 50px; height: 26px; }
    .on { background: #cfcfcf; }
    .zoom { width: 22px; }
    input { appearance: none; flex: none; width: 130px; height: 14px; background: linear-gradient(#777, #777) center / 100% 1px no-repeat; }
    input::-webkit-slider-thumb { appearance: none; width: 6px; height: 13px; background: #666; }
    .pct { width: 36px; text-align: right; }
    .mark { position: absolute; right: 10px; top: 1px; font-size: 20px; line-height: 26px; color: #8a8a8acc; text-shadow: 1px 1px 0 #fffc; pointer-events: none; font-family: "Open Sans", sans-serif; }
  `];
  render() {
    return html`<span>就绪</span><button class="rec" aria-label="录制宏">${I.macro}</button>
      <button class="view on" aria-label="普通">${I.normal}</button><button class="view" aria-label="页面布局">${I.pageLayout}</button><button class="view" aria-label="分页预览">${I.pageBreak}</button>
      <button class="zoom" aria-label="缩小">−</button><input type="range" min="10" max="190" value="90" aria-label="显示比例"><button class="zoom" aria-label="放大">+</button>
      <span class="pct">90%</span><span class="mark">CSDN @coffeetogether</span>`;
  }
}

@customElement("app-root")
class AppRoot extends LitElement {
  static styles = [base, css`
    :host { display: grid; grid-template-rows: auto auto auto auto minmax(0, 1fr) auto 9px; height: 100vh; overflow: hidden; background: #e6e6e6; }
    main { display: grid; grid-template-columns: minmax(0, 1fr) 25px 438px; min-height: 0; }
    .left { display: flex; flex-direction: column; min-height: 0; }
    work-sheet { flex: 1; min-height: 0; }
    .vbar { display: flex; flex-direction: column; margin: 2px 3px 28px; background: #dadada; }
    .vbar button { height: 19px; background: #fff; border: 1px solid #ababab; }
    .thumb { height: 85px; background: #fff; border: 1px solid #ababab; }
    .vbar .last { margin-top: auto; }
    .desk { display: flex; overflow: hidden; background: linear-gradient(to right, #cfcfcf 0 61px, #f0ddd6 489px, #e6dfe2 804px, #e5e0e5 865px, #efe2d8 950px, #d5d5d5 1060px, #d5d6da 1360px, #dcd2d8 1530px, #d3d3d3 1640px); }
    .task { width: 428px; margin-left: 61px; background: #fff; border: 1px solid #c6c6c6; border-bottom: 0; }
    .task2 { width: 61px; margin-left: 315px; background: #f5f3f5; }
    .clock { margin: 4px 92px 0 auto; font: 15px/15px ${UI_FONT}; color: #000; }
  `];
  render() {
    return html`
      <title-bar></title-bar><ribbon-tabs></ribbon-tabs><ribbon-body></ribbon-body><formula-bar></formula-bar>
      <main>
        <div class="left"><work-sheet></work-sheet><sheet-tabs></sheet-tabs></div>
        <div class="vbar"><button aria-label="向上滚动">${I.arrow(UP)}</button><div class="thumb"></div><button class="last" aria-label="向下滚动">${I.arrow(DOWN)}</button></div>
        <field-pane></field-pane>
      </main>
      <status-bar></status-bar>
      <div class="desk"><span class="task"></span><span class="task2"></span><span class="clock">1:00</span></div>`;
  }
}
